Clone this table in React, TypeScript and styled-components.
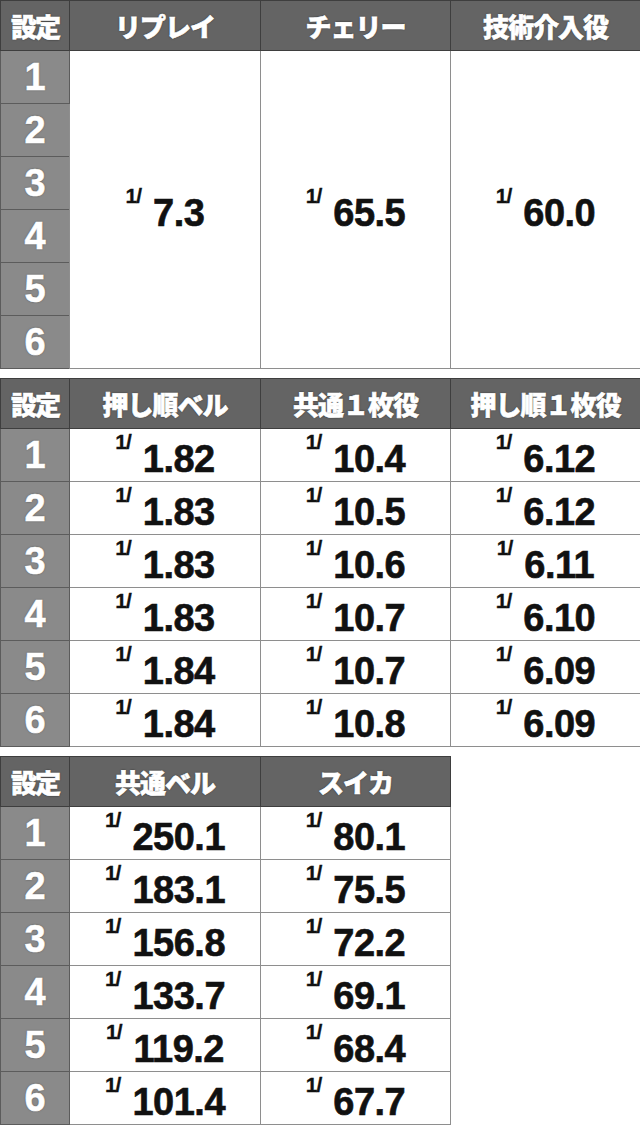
import styled, { createGlobalStyle } from "styled-components";

const GlobalStyle = createGlobalStyle`
  html, body {
    margin: 0;
    padding: 0;
    background: #fff;
  }
  body {
    font-family: "Liberation Sans", "Noto Sans CJK JP", sans-serif;
  }
`;

const Page = styled.div`
  display: flex;
  flex-direction: column;
  gap: 9px;
  width: 640px;
`;

const Table = styled.table<{ $width: number }>`
  width: ${(p) => p.$width}px;
  border-collapse: collapse;
  table-layout: fixed;
`;

const HeadCell = styled.th`
  height: 49px;
  padding: 0;
  background: #646464;
  border: 1px solid #3e3e3e;
  color: #fff;
  font-family: "Noto Sans CJK JP", sans-serif;
  font-weight: 900;
  font-size: 26px;
  letter-spacing: -1px;
  -webkit-text-stroke: 0.6px #fff;
  text-shadow: 0 0 2px rgba(0, 0, 0, 0.7);
  text-align: center;
  vertical-align: middle;
`;

const SetHead = styled(HeadCell)`
  font-size: 26px;
  letter-spacing: -2px;
`;

const SetCell = styled.td`
  height: 52px;
  padding: 0;
  background: #8a8a8a;
  border: 1px solid #5c5c5c;
  color: #fff;
  font-family: "Liberation Sans", sans-serif;
  font-weight: 700;
  font-size: 38px;
  -webkit-text-stroke: 0.5px #fff;
  text-shadow: 0 0 2px rgba(0, 0, 0, 0.5);
  text-align: center;
  vertical-align: middle;
`;

const DataCell = styled.td`
  padding: 0;
  background: #fff;
  border: 1px solid #8e8e8e;
  text-align: center;
  vertical-align: middle;
`;

const Value = styled.div`
  display: inline-flex;
  align-items: flex-start;
  color: #111;
  font-family: "Liberation Sans", sans-serif;
  font-weight: 700;
`;

const Sup = styled.span`
  font-size: 21px;
  line-height: 1;
  margin-right: 12px;
  margin-top: -2px;
  letter-spacing: -1px;
  -webkit-text-stroke: 0.3px #111;
`;

const Num = styled.span`
  font-size: 38px;
  line-height: 1;
  margin-top: 7px;
  letter-spacing: -0.5px;
  -webkit-text-stroke: 0.6px #111;
`;

const Prob = ({ v }: { v: string }) => (
  <Value>
    <Sup>1/</Sup>
    <Num>{v}</Num>
  </Value>
);

const settings = [1, 2, 3, 4, 5, 6];

const table2 = [
  ["1.82", "10.4", "6.12"],
  ["1.83", "10.5", "6.12"],
  ["1.83", "10.6", "6.11"],
  ["1.83", "10.7", "6.10"],
  ["1.84", "10.7", "6.09"],
  ["1.84", "10.8", "6.09"],
];

const table3 = [
  ["250.1", "80.1"],
  ["183.1", "75.5"],
  ["156.8", "72.2"],
  ["133.7", "69.1"],
  ["119.2", "68.4"],
  ["101.4", "67.7"],
];

function Cols({ n }: { n: number }) {
  const widths = [69, 191, 190, 190].slice(0, n);
  return (
    <colgroup>
      {widths.map((w, i) => (
        <col key={i} style={{ width: w }} />
      ))}
    </colgroup>
  );
}

export default function App() {
  return (
    <>
      <GlobalStyle />
      <Page>
        <Table $width={640}>
          <Cols n={4} />
          <thead>
            <tr>
              <SetHead>設定</SetHead>
              <HeadCell>リプレイ</HeadCell>
              <HeadCell>チェリー</HeadCell>
              <HeadCell>技術介入役</HeadCell>
            </tr>
          </thead>
          <tbody>
            {settings.map((s, i) => (
              <tr key={s}>
                <SetCell>{s}</SetCell>
                {i === 0 && (
                  <>
                    <DataCell rowSpan={6}>
                      <Prob v="7.3" />
                    </DataCell>
                    <DataCell rowSpan={6}>
                      <Prob v="65.5" />
                    </DataCell>
                    <DataCell rowSpan={6}>
                      <Prob v="60.0" />
                    </DataCell>
                  </>
                )}
              </tr>
            ))}
          </tbody>
        </Table>

        <Table $width={640}>
          <Cols n={4} />
          <thead>
            <tr>
              <SetHead>設定</SetHead>
              <HeadCell>押し順ベル</HeadCell>
              <HeadCell>共通１枚役</HeadCell>
              <HeadCell>押し順１枚役</HeadCell>
            </tr>
          </thead>
          <tbody>
            {table2.map((row, i) => (
              <tr key={i}>
                <SetCell>{settings[i]}</SetCell>
                {row.map((v, j) => (
                  <DataCell key={j}>
                    <Prob v={v} />
                  </DataCell>
                ))}
              </tr>
            ))}
          </tbody>
        </Table>

        <Table $width={450}>
          <Cols n={3} />
          <thead>
            <tr>
              <SetHead>設定</SetHead>
              <HeadCell>共通ベル</HeadCell>
              <HeadCell>スイカ</HeadCell>
            </tr>
          </thead>
          <tbody>
            {table3.map((row, i) => (
              <tr key={i}>
                <SetCell>{settings[i]}</SetCell>
                {row.map((v, j) => (
                  <DataCell key={j}>
                    <Prob v={v} />
                  </DataCell>
                ))}
              </tr>
            ))}
          </tbody>
        </Table>
      </Page>
    </>
  );
}
